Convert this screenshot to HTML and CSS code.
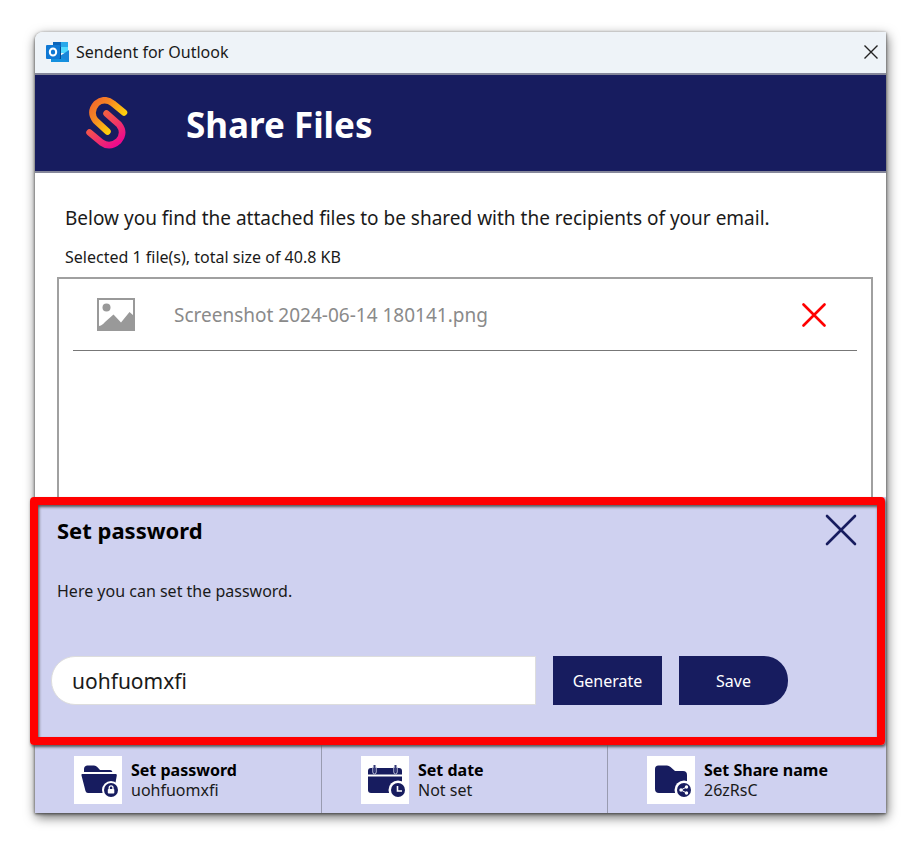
FILE: index.html
```html
<!DOCTYPE html>
<html lang="en">
<head>
<meta charset="utf-8">
<title>Sendent for Outlook</title>
<link rel="stylesheet" href="styles.css">
</head>
<body>
<div class="window">
  <header class="titlebar">
    <svg class="app-icon" viewBox="0 0 24 22" aria-hidden="true">
      <path d="M7 1h8v5H7z" fill="#0a64ba"/>
      <path d="M15 1h7v5h-7z" fill="#28a8ea"/>
      <path d="M15 6h7v6h-7z" fill="#50d9ff"/>
      <path d="M7 6h8v6H7z" fill="#0364b8"/>
      <path d="M5 21V12l9 4 9-6v11z" fill="#1490df"/>
      <path d="M23 9v12L14 15z" fill="#1a86d9"/>
      <path d="M5 6h10v12H5z" fill="#064a8c"/>
      <rect x="0" y="4" width="14" height="14" rx="1" fill="#0f78d4"/>
      <ellipse cx="7" cy="11" rx="3.2" ry="3.6" fill="none" stroke="#fff" stroke-width="2"/>
    </svg>
    <span class="app-name">Sendent for Outlook</span>
    <button class="icon-button" type="button" aria-label="Close window">
      <svg class="close-small" viewBox="0 0 14 14" aria-hidden="true"><path d="M.5.5l13 13M13.500.5l-13 13" stroke="#222" stroke-width="1.400"/></svg>
    </button>
  </header>

  <div class="banner">
    <svg class="logo" viewBox="0 0 42 52" fill="none" stroke-width="6.500" stroke-linecap="round" stroke-linejoin="round" aria-hidden="true">
      <defs>
        <linearGradient id="gold" gradientUnits="userSpaceOnUse" x1="4" y1="8" x2="30" y2="30"><stop offset="0" stop-color="#f26a2c"/><stop offset=".4" stop-color="#f68a22"/><stop offset="1" stop-color="#ffd60a"/></linearGradient>
        <linearGradient id="pink" gradientUnits="userSpaceOnUse" x1="10" y1="18" x2="32" y2="46"><stop offset="0" stop-color="#f4693a"/><stop offset="1" stop-color="#ec0b8c"/></linearGradient>
      </defs>
      <path d="M38 15.500L27 6.500Q18.500 0 10.500 6.500Q3 15 9.500 23.500L21.500 34.500" stroke="url(#gold)"/>
      <path d="M20.500 16.500L33 27.500Q39.500 36 32.500 44Q24 51.500 15.500 45.500L3.500 35.500" stroke="url(#pink)"/>
    </svg>
    <h1 class="banner-title">Share Files</h1>
  </div>

  <main class="content">
    <p class="intro">Below you find the attached files to be shared with the recipients of your email.</p>
    <p class="summary">Selected 1 file(s), total size of 40.8 KB</p>
    <ul class="files">
      <li class="file">
        <svg class="file-icon" viewBox="0 0 38 33" aria-hidden="true">
          <rect x="1" y="1" width="36" height="31" fill="#fff" stroke="#999" stroke-width="2"/>
          <circle cx="9.500" cy="9.500" r="4" fill="#999"/>
          <path d="M2 28C5 27.500 6 26 8 24l8.500-7.500L24 24.500l8.500-10.500L37 18v14H2z" fill="#999"/>
        </svg>
        <span class="file-name">Screenshot 2024-06-14 180141.png</span>
        <button class="icon-button" type="button" aria-label="Remove file">
          <svg class="remove" viewBox="0 0 24 24" aria-hidden="true"><path d="M1.500 1.500l21 21M22.500 1.500l-21 21" stroke="#f00" stroke-width="2.600" stroke-linecap="round"/></svg>
        </button>
      </li>
    </ul>
  </main>

  <section class="panel">
    <div class="panel-head">
      <h2 class="panel-title">Set password</h2>
      <button class="icon-button" type="button" aria-label="Close panel">
        <svg class="close-large" viewBox="0 0 32 32" aria-hidden="true"><path d="M2 2l28 28M30 2L2 30" stroke="#171c5f" stroke-width="2.600" stroke-linecap="round"/></svg>
      </button>
    </div>
    <label class="panel-text" for="password">Here you can set the password.</label>
    <form class="password-form">
      <input class="password" id="password" type="text" value="uohfuomxfi">
      <button class="action" type="button">Generate</button>
      <button class="action action-end" type="button">Save</button>
    </form>
    <div class="highlight"></div>
  </section>

  <nav class="options">
    <button class="option" type="button">
      <svg class="option-icon" viewBox="0 0 48 48" fill="#171c5f" aria-hidden="true">
        <path d="M10 16v-3q0-3 3-3.500h7q2 0 3.500 1.800L26 14h10q2 0 2.500 2z"/>
        <path d="M8 18h34q1 0 .8 1.500L40 35q-.4 2-2.500 2H14q-2 0-2.500-2L7.500 19.500Q7.200 18 8 18z"/>
        <circle cx="37" cy="34" r="9" fill="#fff"/><circle cx="37" cy="34" r="7"/>
        <path d="M35.200 33v-1.200a1.900 1.900 0 013.800 0V33" fill="none" stroke="#fff" stroke-width="1.300"/>
        <rect x="33.800" y="33" width="6.500" height="4.500" rx=".8" fill="#fff"/>
      </svg>
      <span class="option-text"><strong class="option-name">Set password</strong><span class="option-value">uohfuomxfi</span></span>
    </button>
    <button class="option" type="button">
      <svg class="option-icon" viewBox="0 0 48 48" fill="#171c5f" aria-hidden="true">
        <path d="M7 18.500V15q0-3 3-3h28q3 0 3 3v3.500z"/>
        <path d="M7 20.500h34V34q0 3-3 3H10q-3 0-3-3z"/>
        <path d="M11.800 11v5q0 2 1.700 2t1.700-2v-5M32.800 11v5q0 2 1.700 2t1.700-2v-5" fill="none" stroke="#bfc2dc" stroke-width="1"/>
        <path d="M13.500 9v7M34.500 9v7" stroke="#343978" stroke-width="2"/>
        <circle cx="37" cy="34" r="9.500" fill="#fff"/><circle cx="37" cy="34" r="7"/>
        <path d="M36.500 30v5H41" fill="none" stroke="#fff" stroke-width="1.600"/>
      </svg>
      <span class="option-text"><strong class="option-name">Set date</strong><span class="option-value">Not set</span></span>
    </button>
    <button class="option" type="button">
      <svg class="option-icon" viewBox="0 0 48 48" fill="#171c5f" aria-hidden="true">
        <path d="M8 13q0-3.500 3.500-3.500H20q2 0 3.500 1.500l4.500 4h8q4 0 4 4v14q0 4-4 4H12q-4 0-4-4z"/>
        <circle cx="37" cy="34" r="9.500" fill="#fff"/><circle cx="37" cy="34" r="7"/>
        <path d="M39.500 31L34 34l5.500 3" fill="none" stroke="#fff"/>
        <g fill="#fff"><circle cx="39.500" cy="31" r="1.700"/><circle cx="34" cy="34" r="1.700"/><circle cx="39.500" cy="37" r="1.700"/></g>
      </svg>
      <span class="option-text"><strong class="option-name">Set Share name</strong><span class="option-value">26zRsC</span></span>
    </button>
  </nav>
</div>
</body>
</html>
```
FILE: styles.css
```css
* {
  box-sizing: border-box;
}

body {
  display: flex;
  min-height: 100vh;
  margin: 0;
  padding: 32px 34px 37px 35px;
  background: #fff;
  color: #1a1a1a;
  font-family: "Noto Sans", "Open Sans", sans-serif;
  font-size: 16px;
  line-height: 20px;
}

h1,
h2,
p,
ul {
  margin: 0;
  padding: 0;
}

button,
input {
  font: inherit;
}

.window {
  display: flex;
  flex: 1;
  flex-direction: column;
  min-width: 0;
  border-radius: 8px 0 0 0;
  background: #fff;
  box-shadow: 0 1px 3px #444, 1px 4px 12px rgba(0, 0, 0, 0.6);
}

.titlebar {
  display: flex;
  align-items: center;
  gap: 6px;
  height: 43px;
  padding: 0 8px 2px 11px;
  border-bottom: 2px solid #85879a;
  border-radius: 8px 0 0 0;
  background: #eef3f8;
}

.app-icon {
  width: 24px;
  height: 22px;
}

.app-name {
  flex: 1;
}

.icon-button {
  display: flex;
  padding: 0;
  border: 0;
  background: none;
}

.close-small {
  width: 14px;
  height: 14px;
}

.banner {
  display: flex;
  align-items: center;
  gap: 58px;
  height: 98px;
  padding: 0 51px;
  border-bottom: 2px solid #85879a;
  background: #171c5f;
}

.logo {
  width: 42px;
  height: 52px;
}

.banner-title {
  padding-top: 4px;
  color: #fff;
  font-size: 35px;
  line-height: 48px;
}

.content {
  display: flex;
  flex: 1;
  flex-direction: column;
  padding: 32px 13px 0 22px;
}

.intro {
  padding-left: 8px;
  font-size: 19px;
  line-height: 26px;
}

.summary {
  padding: 16px 0 10px 8px;
}

.files {
  flex: 1;
  padding: 0 14px;
  border: 2px solid #a0a0a0;
  border-bottom: 0;
  list-style: none;
}

.file {
  display: flex;
  align-items: center;
  height: 72px;
  padding: 0 31px 0 24px;
  border-bottom: 1px solid #777;
}

.file-icon {
  width: 38px;
  height: 33px;
  margin-right: 39px;
}

.file-name {
  flex: 1;
  color: #8a8a8a;
  font-size: 19px;
  line-height: 26px;
}

.remove {
  width: 24px;
  height: 24px;
}

.panel {
  position: relative;
  padding: 17px 29px 40px 16px;
  background: #cfd1f0;
}

.highlight {
  position: absolute;
  inset: 0 1px 0 -5px;
  border: 8px solid #f00;
  border-radius: 4px;
  box-shadow: 1px 2px 3px #555, inset 1px 2px 3px #555;
  pointer-events: none;
}

.panel-head {
  display: flex;
  align-items: center;
  justify-content: space-between;
  padding-left: 6px;
}

.panel-title {
  color: #000;
  font-size: 22px;
  line-height: 32px;
}

.close-large {
  width: 32px;
  height: 32px;
}

.panel-text {
  display: block;
  padding: 35px 0 55px 6px;
}

.password-form {
  display: flex;
  gap: 17px;
  padding-right: 69px;
}

.password {
  flex: 1;
  min-width: 0;
  padding: 0 20px;
  border: 1px solid #ddd;
  border-radius: 24px 0 0 24px;
  background: #fff;
  color: #1a1a1a;
  font-size: 21px;
}

.action {
  width: 109px;
  height: 49px;
  padding: 0;
  border: 0;
  background: #171c5f;
  color: #fff;
}

.action-end {
  border-radius: 0 24px 24px 0;
}

.options {
  display: grid;
  grid-template-columns: 286fr 286fr 279fr;
  background: #cfd1f0;
}

.option {
  display: flex;
  align-items: center;
  gap: 9px;
  height: 68px;
  padding: 2px 0 0 39px;
  border: 0;
  background: none;
  color: #1a1a1a;
  text-align: left;
}

.option + .option {
  border-left: 1px solid #999bb0;
}

.option-icon {
  width: 48px;
  height: 48px;
  background: #fff;
}

.option-text {
  display: grid;
}

.option-name {
  color: #000;
}
```
